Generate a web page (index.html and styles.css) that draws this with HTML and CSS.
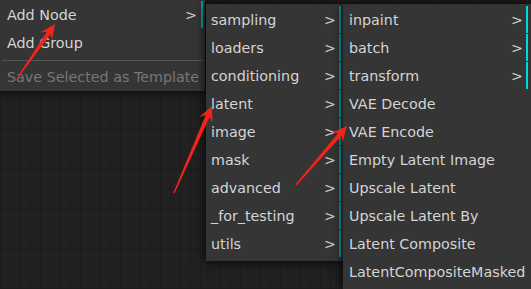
FILE: index.html
```html
<!DOCTYPE html>
<html lang="en">
<head>
    <meta charset="UTF-8">
    <title>Add Node menu</title>
    <link rel="stylesheet" href="styles.css">
</head>
<body>
    <div class="canvas">
        <div class="menu menu-main">
            <div class="entry submenu">Add Node</div>
            <div class="entry">Add Group</div>
            <div class="separator"></div>
            <div class="entry disabled">Save Selected as Template</div>
        </div>

        <div class="menu menu-category">
            <div class="entry submenu">sampling</div>
            <div class="entry submenu">loaders</div>
            <div class="entry submenu">conditioning</div>
            <div class="entry submenu">latent</div>
            <div class="entry submenu">image</div>
            <div class="entry submenu">mask</div>
            <div class="entry submenu">advanced</div>
            <div class="entry submenu">_for_testing</div>
            <div class="entry submenu">utils</div>
        </div>

        <div class="menu menu-latent">
            <div class="entry submenu">inpaint</div>
            <div class="entry submenu">batch</div>
            <div class="entry submenu">transform</div>
            <div class="entry">VAE Decode</div>
            <div class="entry">VAE Encode</div>
            <div class="entry">Empty Latent Image</div>
            <div class="entry">Upscale Latent</div>
            <div class="entry">Upscale Latent By</div>
            <div class="entry">Latent Composite</div>
            <div class="entry">LatentCompositeMasked</div>
        </div>

        <!-- red hand-drawn pointers from the screenshot tool -->
        <svg class="marks" width="531" height="289" viewBox="0 0 531 289">
            <polygon points="18.5,77.3 50.5,34.3 52.2,40.3 55,24 40.7,32.3 46.9,31.8 17.5,76.7"/>
            <polygon points="174.6,193.2 209.6,117 212.4,122.6 212,106 199.6,117 205.6,115.2 173.4,192.8"/>
            <polygon points="296.5,185.4 341.5,135.8 342.5,141.9 347,126 331.9,132.8 338.2,132.9 295.5,184.6"/>
        </svg>
    </div>
</body>
</html>
```

FILE: styles.css
```css
body {
    margin: 0;
    background-color: #202020;
    overflow: hidden;
}

.canvas {
    position: relative;
    width: 531px;
    height: 289px;
    overflow: hidden;
    background-color: #212121;
    background-image:
        repeating-linear-gradient(90deg, #1c1c1c 0 1px, transparent 1px 10px),
        repeating-linear-gradient(0deg, #1c1c1c 0 1px, transparent 1px 10px);
}

.menu {
    position: absolute;
    background-color: #353535;
    box-shadow: 0 0 10px #000;
    font-family: "DejaVu Sans", Tahoma, sans-serif;
    font-size: 14.3px;
    color: #d4d4d4;
    padding: 2px 0 3px;
}

.entry {
    display: flex;
    justify-content: space-between;
    align-items: center;
    height: 26px;
    margin: 0 2px 1px;
    padding: 1px 3px 0 3px;
    white-space: nowrap;
}

.entry.submenu {
    border-right: 2px solid #00a4a4;
}

.entry.submenu::after {
    content: ">";
    color: #cfcfcf;
}

.entry.disabled {
    color: #777;
}

.separator {
    height: 0;
    margin: 4px 2px 2px;
    border-top: 1px solid #555;
}

.menu-main {
    left: 0;
    top: -1px;
    width: 205px;
    padding-bottom: 0;
}

.menu-main .entry {
    padding-left: 5px;
    padding-right: 4px;
}

.menu-category {
    left: 206px;
    top: 4px;
    width: 137px;
}

.menu-latent {
    left: 343px;
    top: 4px;
    width: 188px;
}

.menu-latent .entry {
    margin-right: 3px;
    padding-left: 4px;
}

.menu-latent .entry.submenu {
    border-right-color: #00dada;
}

.marks {
    position: absolute;
    left: 0;
    top: 0;
    fill: #f3231c;
}
```
